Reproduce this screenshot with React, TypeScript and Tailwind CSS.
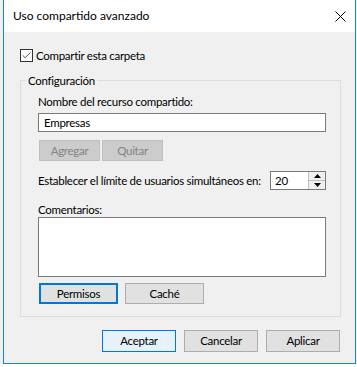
import { Check } from "lucide-react";

const font = "font-['Segoe_UI','Lato',sans-serif]";

function Btn({ label, variant = "normal", className = "" }: { label: string; variant?: "normal" | "focus" | "default" | "disabled"; className?: string }) {
    const styles = {
        normal: "bg-[#e1e1e1] border border-[#adadad] text-black",
        focus: "bg-[#e1e1e1] border-2 border-[#0078d7] text-black",
        default: "bg-[#e5f1fb] border border-[#0078d7] text-black",
        disabled: "bg-[#cccccc] border border-[#bfbfbf] text-[#838383]",
    }[variant];
    return (
        <div className={`flex items-center justify-center leading-none ${styles} ${className}`}>
            {label}
        </div>
    );
}

export default function App() {
    return (
        <div className={`w-[357px] h-[367px] overflow-hidden bg-[#f0f0f0] text-[11.5px] tracking-[-0.28px] text-black ${font}`}>
            <div className="ml-[3px] w-[353px] border-x border-b border-[#1883d7] bg-[#f0f0f0]">
                {/* title bar */}
                <div className="h-[32px] bg-white flex items-center justify-between pl-[9px] pr-[8px]">
                    <span className="leading-none text-[12px] tracking-normal">Uso compartido avanzado</span>
                    <svg width="11" height="11" viewBox="0 0 11 11" className="mr-[1px]">
                        <path d="M0.5 0.5 L10.5 10.5 M10.5 0.5 L0.5 10.5" stroke="#000" strokeWidth="1" />
                    </svg>
                </div>

                <div className="pl-[16px] pr-[14px] pt-[17px] pb-[11px]">
                    <label className="flex items-center gap-[3px] h-[13px]">
                        <span className="w-[13px] h-[13px] border border-[#333] bg-white flex items-center justify-center">
                            <Check size={11} strokeWidth={1.6} className="text-[#222]" />
                        </span>
                        <span className="leading-none">Compartir esta carpeta</span>
                    </label>

                    <fieldset className="mt-[11px] w-[321px] border border-[#dcdcdc] pl-[17px] pr-[14px] pt-[6px] pb-[12px]">
                        <legend className="-ml-[12px] px-[2px] leading-[15px]">Configuración</legend>

                        <div className="leading-[15px]">Nombre del recurso compartido:</div>
                        <div className="mt-[4px] h-[19px] w-[288px] bg-white border border-[#7a7a7a] flex items-center pl-[5px] leading-none">
                            Empresas
                        </div>

                        <div className="mt-[8px] flex gap-[2px] pl-[1px]">
                            <Btn label="Agregar" variant="disabled" className="w-[61px] h-[21px]" />
                            <Btn label="Quitar" variant="disabled" className="w-[61px] h-[21px]" />
                        </div>

                        <div className="mt-[10px] flex items-center justify-between w-[288px]">
                            <span className="leading-none whitespace-nowrap">Establecer el límite de usuarios simultáneos en:</span>
                            <div className="flex h-[19px] w-[56px] border border-[#7a7a7a] bg-white">
                                <div className="flex-1 flex items-center pl-[4px] leading-none">20</div>
                                <div className="w-[17px] flex flex-col border-l border-[#bfbfbf]">
                                    <div className="flex-1 bg-[#f0f0f0] border-b border-[#bfbfbf] flex items-center justify-center">
                                        <svg width="7" height="4" viewBox="0 0 7 4"><path d="M3.5 0 L7 4 L0 4 Z" fill="#000" /></svg>
                                    </div>
                                    <div className="flex-1 bg-[#f0f0f0] flex items-center justify-center">
                                        <svg width="7" height="4" viewBox="0 0 7 4"><path d="M0 0 L7 0 L3.5 4 Z" fill="#000" /></svg>
                                    </div>
                                </div>
                            </div>
                        </div>

                        <div className="mt-[12px] leading-[15px]">Comentarios:</div>
                        <div className="h-[60px] w-[288px] bg-white border border-[#7a7a7a]" />

                        <div className="mt-[6px] flex gap-[7px] pl-[1px]">
                            <Btn label="Permisos" variant="focus" className="w-[79px] h-[21px]" />
                            <Btn label="Caché" variant="normal" className="w-[79px] h-[21px]" />
                        </div>
                    </fieldset>

                    <div className="mt-[13px] flex justify-end gap-[8px] pr-[1px]">
                        <Btn label="Aceptar" variant="default" className="w-[74px] h-[22px]" />
                        <Btn label="Cancelar" variant="normal" className="w-[74px] h-[22px]" />
                        <Btn label="Aplicar" variant="normal" className="w-[74px] h-[22px]" />
                    </div>
                </div>
            </div>
            <div className="bg-white h-[20px]" />
        </div>
    );
}
